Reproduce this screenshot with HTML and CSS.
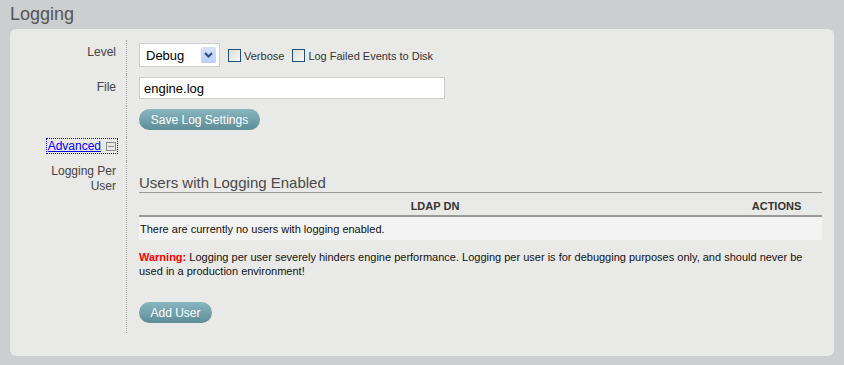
FILE: index.html
```html
<!DOCTYPE html>
<html lang="en">
<head>
    <meta charset="UTF-8">
    <title>Logging</title>
    <link rel="stylesheet" href="styles.css">
</head>
<body>
    <h1 class="page-title">Logging</h1>
    <div class="panel">
        <div class="form-grid">
            <div class="label level-label">Level</div>
            <div class="field level-field">
                <div class="select-box">
                    <span class="select-value">Debug</span>
                    <span class="select-arrow">
                        <svg width="9" height="6" viewBox="0 0 9 6"><path d="M1 1 L4.5 4.5 L8 1" fill="none" stroke="#2b4a8a" stroke-width="2"/></svg>
                    </span>
                </div>
                <label class="check"><span class="check-box"></span>Verbose</label>
                <label class="check"><span class="check-box"></span>Log Failed Events to Disk</label>
            </div>

            <div class="label file-label">File</div>
            <div class="field file-field">
                <input type="text" class="text-input" value="engine.log">
            </div>

            <div class="label"></div>
            <div class="field save-field">
                <button class="pill-button save-button">Save Log Settings</button>
            </div>

            <div class="label advanced-label">
                <a href="#" class="advanced-link">Advanced <span class="collapse-icon"></span></a>
            </div>
            <div class="field"></div>

            <div class="label per-user-label">Logging Per<br>User</div>
            <div class="field per-user-field">
                <h2 class="section-title">Users with Logging Enabled</h2>
                <table class="user-table">
                    <thead>
                        <tr>
                            <th class="col-dn">LDAP DN</th>
                            <th class="col-actions">ACTIONS</th>
                        </tr>
                    </thead>
                    <tbody>
                        <tr>
                            <td colspan="2">There are currently no users with logging enabled.</td>
                        </tr>
                    </tbody>
                </table>
                <p class="warning"><span class="warning-label">Warning:</span> Logging per user severely hinders engine performance. Logging per user is for debugging purposes only, and should never be used in a production environment!</p>
                <button class="pill-button add-button">Add User</button>
            </div>
        </div>
    </div>
</body>
</html>
```

FILE: styles.css
```css
* {
    margin: 0;
    padding: 0;
    box-sizing: border-box;
}

body {
    font-family: 'Liberation Sans', Arial, sans-serif;
    background-color: #cdced0;
    color: #222222;
    height: 365px;
    overflow: hidden;
}

.page-title {
    font-size: 18px;
    font-weight: normal;
    color: #555555;
    padding: 4px 10px 0;
    height: 29px;
}

.panel {
    margin: 0 10px;
    height: 327px;
    background-color: #e9e9e7;
    border-radius: 6px;
    padding-top: 11px;
}

.form-grid {
    display: grid;
    grid-template-columns: 117px 1fr;
}

.label {
    border-right: 1px dotted #a6a6a6;
    text-align: right;
    padding-right: 10px;
    font-size: 12px;
    color: #444444;
}

.field {
    padding-left: 12px;
    padding-right: 12px;
}

.level-label {
    padding-top: 5px;
    height: 34px;
}

.level-field {
    display: flex;
    align-items: flex-start;
    padding-top: 3px;
    height: 34px;
}

.select-box {
    width: 81px;
    height: 24px;
    background-color: #ffffff;
    border: 1px solid #cfcfcf;
    display: flex;
    align-items: center;
    justify-content: space-between;
    padding: 0 3px 0 6px;
    font-size: 13px;
    color: #000000;
}

.select-arrow {
    width: 15px;
    height: 16px;
    background: linear-gradient(#d6e2fb, #b9cdf5);
    border-radius: 2px;
    display: flex;
    align-items: center;
    justify-content: center;
}

.check {
    display: flex;
    align-items: center;
    font-size: 11px;
    color: #333333;
    margin-left: 8px;
    margin-top: 6px;
}

.check-box {
    width: 13px;
    height: 13px;
    border: 1px solid #1d4f7c;
    background: linear-gradient(135deg, #dcdcd7, #f8f8f6);
    margin-right: 3px;
}

.file-label {
    padding-top: 6px;
    height: 32px;
}

.file-field {
    padding-top: 3px;
}

.text-input {
    width: 306px;
    height: 22px;
    border: 1px solid #cfcfcf;
    background-color: #ffffff;
    font-family: 'Liberation Sans', Arial, sans-serif;
    font-size: 13px;
    color: #000000;
    padding: 0 4px;
    outline: none;
}

.save-field {
    padding-top: 3px;
    height: 31px;
}

.pill-button {
    display: block;
    height: 21px;
    border: none;
    border-radius: 11px;
    background: linear-gradient(#8ab6c1, #5d8c98);
    color: #ffffff;
    font-family: 'Liberation Sans', Arial, sans-serif;
    font-size: 12px;
    padding: 0 10px;
    cursor: pointer;
}

.save-button {
    width: 121px;
}

.advanced-label {
    padding-top: 2px;
    height: 24px;
}

.advanced-link {
    font-size: 12px;
    color: #0000ff;
    outline: 1px dotted #0000ff;
    padding: 0 1px;
    display: inline-flex;
    align-items: center;
    line-height: 14px;
    margin-right: -1px;
}

.collapse-icon {
    display: inline-block;
    width: 10px;
    height: 9px;
    border: 1px solid #8c8c8c;
    margin-left: 5px;
    position: relative;
}

.collapse-icon::after {
    content: '';
    position: absolute;
    left: 1px;
    right: 1px;
    top: 3px;
    height: 1px;
    background-color: #8c8c8c;
}

.per-user-label {
    padding-top: 3px;
    line-height: 15px;
    height: 172px;
}

.per-user-field {
    padding-top: 14px;
}

.section-title {
    font-size: 15px;
    font-weight: normal;
    color: #4a4a4a;
    border-bottom: 1px solid #9a9a9a;
    line-height: 16px;
    padding-bottom: 1px;
}

.user-table {
    width: 100%;
    border-collapse: collapse;
    font-size: 11px;
}

.user-table th {
    font-weight: bold;
    color: #333333;
    height: 23px;
    padding-top: 3px;
    border-bottom: 2px solid #999999;
}

.col-actions {
    width: 91px;
}

.user-table td {
    background-color: #f3f3f3;
    height: 24px;
    padding-left: 1px;
    color: #111111;
}

.warning {
    font-size: 11px;
    line-height: 14px;
    margin-top: 10px;
    color: #111111;
}

.warning-label {
    font-weight: bold;
    color: #ff0000;
}

.add-button {
    margin-top: 24px;
    width: 73px;
}
```
